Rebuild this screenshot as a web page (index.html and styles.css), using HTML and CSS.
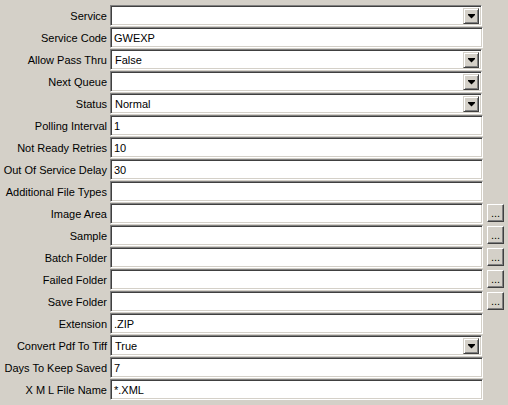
FILE: index.html
```html
<!DOCTYPE html>
<html lang="en">
<head>
    <meta charset="UTF-8">
    <title>Service Properties</title>
    <link rel="stylesheet" href="styles.css">
</head>
<body>
    <div class="props">
        <div class="label">Service</div>
        <div class="field combo"><span class="value"></span><span class="drop"><svg width="7" height="5" viewBox="0 0 7 5"><rect x="0" y="0" width="7" height="1" fill="#000"/><polygon points="0,1 7,1 3.5,4.5" fill="#000"/></svg></span></div>
        <div></div>

        <div class="label">Service Code</div>
        <div class="field"><span class="value">GWEXP</span></div>
        <div></div>

        <div class="label">Allow Pass Thru</div>
        <div class="field combo"><span class="value">False</span><span class="drop"><svg width="7" height="5" viewBox="0 0 7 5"><rect x="0" y="0" width="7" height="1" fill="#000"/><polygon points="0,1 7,1 3.5,4.5" fill="#000"/></svg></span></div>
        <div></div>

        <div class="label">Next Queue</div>
        <div class="field combo"><span class="value"></span><span class="drop"><svg width="7" height="5" viewBox="0 0 7 5"><rect x="0" y="0" width="7" height="1" fill="#000"/><polygon points="0,1 7,1 3.5,4.5" fill="#000"/></svg></span></div>
        <div></div>

        <div class="label">Status</div>
        <div class="field combo"><span class="value">Normal</span><span class="drop"><svg width="7" height="5" viewBox="0 0 7 5"><rect x="0" y="0" width="7" height="1" fill="#000"/><polygon points="0,1 7,1 3.5,4.5" fill="#000"/></svg></span></div>
        <div></div>

        <div class="label">Polling Interval</div>
        <div class="field"><span class="value">1</span></div>
        <div></div>

        <div class="label">Not Ready Retries</div>
        <div class="field"><span class="value">10</span></div>
        <div></div>

        <div class="label">Out Of Service Delay</div>
        <div class="field"><span class="value">30</span></div>
        <div></div>

        <div class="label">Additional File Types</div>
        <div class="field"><span class="value"></span></div>
        <div></div>

        <div class="label">Image Area</div>
        <div class="field"><span class="value"></span></div>
        <div class="browse">...</div>

        <div class="label">Sample</div>
        <div class="field"><span class="value"></span></div>
        <div class="browse">...</div>

        <div class="label">Batch Folder</div>
        <div class="field"><span class="value"></span></div>
        <div class="browse">...</div>

        <div class="label">Failed Folder</div>
        <div class="field"><span class="value"></span></div>
        <div class="browse">...</div>

        <div class="label">Save Folder</div>
        <div class="field"><span class="value"></span></div>
        <div class="browse">...</div>

        <div class="label">Extension</div>
        <div class="field"><span class="value">.ZIP</span></div>
        <div></div>

        <div class="label">Convert Pdf To Tiff</div>
        <div class="field combo"><span class="value">True</span><span class="drop"><svg width="7" height="5" viewBox="0 0 7 5"><rect x="0" y="0" width="7" height="1" fill="#000"/><polygon points="0,1 7,1 3.5,4.5" fill="#000"/></svg></span></div>
        <div></div>

        <div class="label">Days To Keep Saved</div>
        <div class="field"><span class="value">7</span></div>
        <div></div>

        <div class="label">X M L File Name</div>
        <div class="field"><span class="value">*.XML</span></div>
        <div></div>
    </div>
</body>
</html>
```

FILE: styles.css
```css
body {
    margin: 0;
    background-color: #d4d0c8;
    font-family: "Liberation Sans", Arial, sans-serif;
    font-size: 11px;
    color: #000;
}
.props {
    display: grid;
    grid-template-columns: 110px 373px 25px;
    grid-auto-rows: 21px;
    row-gap: 1px;
    padding-top: 5px;
}
.label {
    display: flex;
    align-items: center;
    justify-content: flex-end;
    padding-right: 3px;
    white-space: nowrap;
}
.field {
    display: flex;
    align-items: center;
    background-color: #fff;
    border: 1px solid;
    border-color: #808080 #fff #fff #808080;
    box-shadow: inset 1px 1px #404040, inset -1px -1px #d4d0c8;
    padding: 0 2px 0 3px;
    overflow: hidden;
}
.field .value {
    flex: 1;
    white-space: nowrap;
}
.field.combo {
    margin-right: 1px;
    padding: 2px 2px 2px 4px;
}
.drop {
    width: 16px;
    height: 16px;
    box-sizing: border-box;
    display: flex;
    align-items: center;
    justify-content: center;
    background-color: #d4d0c8;
    border: 1px solid;
    border-color: #d4d0c8 #404040 #404040 #d4d0c8;
    box-shadow: inset 1px 1px #fff, inset -1px -1px #808080;
}
.drop svg {
    display: block;
    margin-top: 1px;
}
.browse {
    margin: 1px 0 0 4px;
    width: 17px;
    height: 18px;
    box-sizing: border-box;
    background-color: #d4d0c8;
    border: 1px solid;
    border-color: #fff #404040 #404040 #fff;
    box-shadow: inset -1px -1px #808080;
    display: flex;
    align-items: flex-end;
    justify-content: center;
    line-height: 13px;
    padding-bottom: 1px;
}
```
